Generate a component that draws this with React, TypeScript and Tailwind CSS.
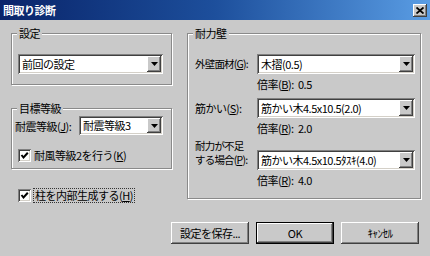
import React from "react";

const raised =
  "bg-[#c9c9c9] shadow-[inset_-1px_-1px_0_#404040,inset_1px_1px_0_#ffffff,inset_-2px_-2px_0_#808080]";
const sunken =
  "bg-white shadow-[inset_1px_1px_0_#808080,inset_-1px_-1px_0_#ffffff,inset_2px_2px_0_#404040,inset_-2px_-2px_0_#d4d0c8]";
const etched =
  "border border-[#8a8a8a] shadow-[inset_1px_1px_0_#ffffff,1px_1px_0_#ffffff]";

function Select({ text, className }: { text: string; className: string }) {
  return (
    <div className={`flex items-stretch ${sunken} ${className}`}>
      <span className="flex-1 flex items-center pl-[4px] leading-none whitespace-nowrap overflow-hidden">
        {text}
      </span>
      <span className={`my-[2px] mr-[2px] w-[14px] flex items-center justify-center ${raised}`}>
        <svg width="7" height="4" viewBox="0 0 7 4">
          <path d="M0 0h7L3.5 4z" fill="#000" />
        </svg>
      </span>
    </div>
  );
}

function Check() {
  return (
    <span className={`w-[13px] h-[13px] shrink-0 flex items-center justify-center ${sunken}`}>
      <svg width="9" height="9" viewBox="0 0 9 9">
        <path d="M1.5 4 L3.5 6.5 L7.8 1.8" stroke="#000" strokeWidth="2" fill="none" />
      </svg>
    </span>
  );
}

function Group({ title, className, children }: { title: string; className: string; children: React.ReactNode }) {
  return (
    <div className={`relative ${etched} ${className}`}>
      <span className="absolute left-[5px] -top-[7px] px-[2px] bg-[#c9c9c9] leading-[13px]">{title}</span>
      {children}
    </div>
  );
}

function Ratio({ label, value }: { label: React.ReactNode; value: string }) {
  return (
    <div className="flex items-center h-[20px] pl-[62px]">
      <span className="w-[41px]">{label}</span>
      <span>{value}</span>
    </div>
  );
}

function Button({ children, main }: { children: React.ReactNode; main?: boolean }) {
  return (
    <div
      className={`h-[22px] flex items-center justify-center ${raised} ${
        main ? "w-[78px] border border-black" : "w-[78px]"
      }`}
    >
      {children}
    </div>
  );
}

export default function App() {
  return (
    <div className="w-[430px] h-[256px] bg-[#c9c9c9] flex flex-col overflow-hidden text-[11px] tracking-[-0.5px] text-black font-['Noto_Sans_CJK_JP',sans-serif]">
      <div className="h-[20px] shrink-0 flex items-center justify-between pl-[3px] pr-[3px] bg-linear-to-r from-[#0a246a] via-[#1d4f9c] to-[#5a9de4]">
        <span className="text-white font-bold leading-none">間取り診断</span>
        <span className={`w-[14px] h-[13px] flex items-center justify-center ${raised}`}>
          <svg width="8" height="7" viewBox="0 0 8 7">
            <path d="M0.5 0.5 L7.5 6.5 M7.5 0.5 L0.5 6.5" stroke="#000" strokeWidth="1.8" />
          </svg>
        </span>
      </div>

      <div className="flex-1 pl-[11px] pt-[13px]">
        <div className="flex h-[170px]">
          <div className="w-[161px] flex flex-col">
            <Group title="設定" className="h-[53px] pt-[20px] pl-[6px]">
              <Select text="前回の設定" className="w-[145px] h-[20px]" />
            </Group>

            <Group title="目標等級" className="mt-[23px] h-[62px] pt-[7px] pl-[3px]">
              <div className="flex items-center">
                <span className="w-[64px] whitespace-nowrap">
                  耐震等級(<u>J</u>):
                </span>
                <Select text="耐震等級3" className="w-[84px] h-[19px]" />
              </div>
              <div className="mt-[14px] pl-[3px] flex items-center gap-[3px]">
                <Check />
                <span className="leading-[13px]">
                  耐風等級2を行う(<u>K</u>)
                </span>
              </div>
            </Group>

            <div className="mt-[19px] pl-[7px] flex items-center gap-[2px]">
              <Check />
              <span className="leading-[13px] px-[1px] border border-dotted border-[#333]">
                柱を内部生成する(<u>H</u>)
              </span>
            </div>
          </div>

          <Group title="耐力壁" className="ml-[15px] w-[234px] h-[166px] pt-[20px] pl-[7px]">
            <div className="flex items-center">
              <span className="w-[62px] shrink-0 whitespace-nowrap text-[10.5px] tracking-[-0.8px]">
                外壁面材(<u>G</u>):
              </span>
              <Select text="木摺(0.5)" className="w-[158px] h-[20px]" />
            </div>
            <Ratio label={<>倍率(<u>B</u>):</>} value="0.5" />

            <div className="mt-[4px] flex items-center">
              <span className="w-[62px] shrink-0 whitespace-nowrap">
                筋かい(<u>S</u>):
              </span>
              <Select text="筋かい木4.5x10.5(2.0)" className="w-[158px] h-[20px]" />
            </div>
            <Ratio label={<>倍率(<u>R</u>):</>} value="2.0" />

            <div className="mt-[1px] flex items-end">
              <span className="w-[62px] shrink-0 leading-[14px] pb-[3px] whitespace-nowrap text-[10.5px] tracking-[-0.8px]">
                耐力が不足
                <br />
                する場合(<u>P</u>):
              </span>
              <Select text="筋かい木4.5x10.5ﾀｽｷ(4.0)" className="w-[158px] h-[20px]" />
            </div>
            <Ratio label={<>倍率(<u>R</u>):</>} value="4.0" />
          </Group>
        </div>

        <div className="mt-[19px] flex justify-end gap-[7px] pr-[11px]">
          <Button>設定を保存...</Button>
          <Button main>OK</Button>
          <Button>ｷｬﾝｾﾙ</Button>
        </div>
      </div>
    </div>
  );
}
